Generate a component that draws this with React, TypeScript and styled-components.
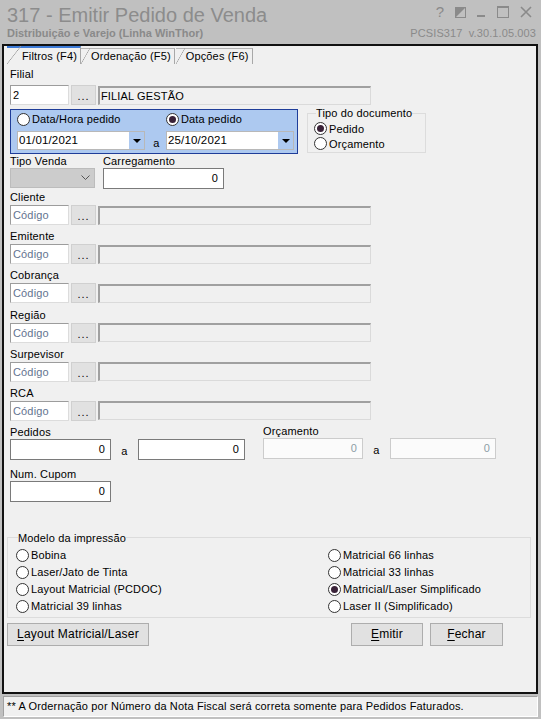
import React from 'react';
import styled, { createGlobalStyle } from 'styled-components';

const GlobalStyle = createGlobalStyle`
    html, body {
        margin: 0;
        padding: 0;
    }
    body {
        background: #c0c0c0;
        font-family: "Liberation Sans", Arial, sans-serif;
        font-size: 11px;
        letter-spacing: 0.15px;
        color: #000;
    }
    * {
        box-sizing: border-box;
    }
`;

const Window = styled.div`
    width: 541px;
    height: 719px;
    display: flex;
    flex-direction: column;
    background: #c0c0c0;
    overflow: hidden;
`;

const Header = styled.div`
    height: 44px;
    flex: none;
    display: flex;
    justify-content: space-between;
    padding: 3px 5px 0 7px;
    color: #8a8a8a;
    letter-spacing: 0;
`;

const TitleBlock = styled.div`
    display: flex;
    flex-direction: column;
`;

const Title = styled.div`
    font-size: 20px;
    line-height: 24px;
    color: #8c8c8c;
`;

const Subtitle = styled.div`
    font-size: 11px;
    font-weight: bold;
    line-height: 13px;
`;

const HeaderRight = styled.div`
    display: flex;
    flex-direction: column;
    align-items: flex-end;
`;

const WindowButtons = styled.div`
    display: flex;
    align-items: center;
    gap: 11px;
    height: 16px;
    margin-top: 1px;
    margin-bottom: 7px;
    padding-right: 4px;
`;

const HelpGlyph = styled.span`
    font-size: 15px;
    line-height: 16px;
    color: #8a8a8a;
`;

const Version = styled.div`
    font-size: 11px;
    line-height: 13px;
    letter-spacing: 0.1px;
`;

const Panel = styled.div`
    flex: none;
    height: 650px;
    margin: 0 3px 0 2px;
    border: 2px solid #111;
    background: #f0f0f0;
    display: flex;
    flex-direction: column;
`;

const TabStrip = styled.div`
    display: flex;
    align-items: flex-end;
    height: 18px;
    padding-left: 3px;
`;

const Tab = styled.div<{ $active?: boolean }>`
    position: relative;
    height: ${p => (p.$active ? 18 : 16)}px;
    line-height: ${p => (p.$active ? 17 : 15)}px;
    padding: 0 3px 0 ${p => (p.$active ? 15 : 10)}px;
    margin-right: ${p => (p.$active ? 0 : 1)}px;
    border-top: ${p => (p.$active ? '2px solid #3d7ad6' : '1px solid #b4b4b4')};
    border-right: 1px solid #a8a8a8;
    &::before {
        content: '';
        position: absolute;
        left: 0;
        top: ${p => (p.$active ? -2 : -1)}px;
        bottom: 0;
        width: ${p => (p.$active ? 14 : 9)}px;
        background: linear-gradient(to top left, transparent calc(50% - 0.6px), #a0a0a0 50%, transparent calc(50% + 0.6px));
    }
`;

const Sheet = styled.div`
    flex: 1;
    padding: 4px 0 0 6px;
    display: flex;
    flex-direction: column;
`;

const Label = styled.div`
    line-height: 13px;
    height: 13px;
    white-space: nowrap;
`;

const Row = styled.div`
    display: flex;
    align-items: center;
    gap: 2px;
`;

const CodeInput = styled.input`
    width: 59px;
    height: 20px;
    padding: 0 2px;
    font: inherit;
    letter-spacing: inherit;
    color: #000;
    background: #fff;
    border: 1px solid;
    border-color: #9c9c9c #dcdcdc #dcdcdc #9c9c9c;
    outline: none;
    &::placeholder {
        color: #63738f;
    }
`;

const DotsButton = styled.div`
    width: 25px;
    height: 20px;
    background: #e1e1e1;
    border: 1px solid #d0d0d0;
    text-align: center;
    line-height: 20px;
    letter-spacing: 1px;
`;

const NameField = styled.div`
    width: 273px;
    height: 19px;
    background: #f0f0f0;
    border-style: solid;
    border-width: 2px 1px 1px 2px;
    border-color: #a0a0a0 #dadada #dadada #a0a0a0;
    padding-left: 1px;
    line-height: 16px;
    white-space: nowrap;
`;

const NumberBox = styled.div<{ $w: number; $disabled?: boolean }>`
    width: ${p => p.$w}px;
    height: 21px;
    background: ${p => (p.$disabled ? '#fbfbfb' : '#fff')};
    border: 1px solid ${p => (p.$disabled ? '#cccccc' : '#7a7a7a')};
    color: ${p => (p.$disabled ? '#8d9ea6' : '#000')};
    text-align: right;
    padding-right: 5px;
    line-height: 18px;
`;

const Between = styled.span`
    width: 27px;
    text-align: center;
    padding-top: 6px;
`;

const DateBlock = styled.div`
    display: flex;
    align-items: flex-start;
    gap: 9px;
    margin-top: 4px;
`;

const BluePanel = styled.div`
    width: 288px;
    height: 45px;
    background: #adc9f0;
    border: 1px solid #1f3d99;
    padding: 1px 3px 0 6px;
    display: grid;
    grid-template-columns: 128px 21px 128px;
    grid-template-rows: 16px 19px;
    row-gap: 4px;
`;

const RadioLabel = styled.label<{ $col?: number }>`
    display: flex;
    align-items: center;
    gap: 2px;
    height: 16px;
    white-space: nowrap;
    ${p => (p.$col ? `grid-column: ${p.$col};` : '')}
`;

const RadioCircle = styled.span<{ $checked?: boolean }>`
    flex: none;
    width: 13px;
    height: 13px;
    border-radius: 50%;
    border: 1px solid #333;
    background: #fff;
    display: flex;
    align-items: center;
    justify-content: center;
    &::after {
        content: '';
        width: 7px;
        height: 7px;
        border-radius: 50%;
        background: ${p => (p.$checked ? '#3a2238' : 'transparent')};
    }
`;

const DateCombo = styled.div`
    display: flex;
    height: 19px;
    background: #fff;
    border: 1px solid #b8b8b8;
`;

const DateText = styled.div`
    flex: 1;
    padding-left: 1px;
    line-height: 17px;
    font-size: 11.5px;
`;

const DropButton = styled.div`
    width: 15px;
    background: #adc9f0;
    display: flex;
    align-items: center;
    justify-content: center;
    &::after {
        content: '';
        border-left: 4px solid transparent;
        border-right: 4px solid transparent;
        border-top: 4px solid #000;
    }
`;

const DateSep = styled.span`
    align-self: end;
    text-align: center;
    line-height: 14px;
    padding-left: 2px;
`;

const GroupBox = styled.fieldset<{ $w: number }>`
    width: ${p => p.$w}px;
    margin: 0;
    border: 1px solid #dcdcdc;
    padding: 0;
    min-inline-size: 0;
`;

const Legend = styled.legend`
    padding: 0;
    margin-left: 2px;
    line-height: 12px;
`;

const DocGroup = styled(GroupBox)`
    margin-top: -2px;
    padding: 2px 0 1px 6px;
    display: flex;
    flex-direction: column;
`;

const StackedRadio = styled(RadioLabel)`
    height: 15px;
`;

const PairRow = styled.div`
    display: flex;
    gap: 8px;
    margin-top: 1px;
`;

const Column = styled.div`
    display: flex;
    flex-direction: column;
`;

const ComboDisabled = styled.div`
    width: 85px;
    height: 20px;
    background: #cccccc;
    border: 1px solid #bcbcbc;
    display: flex;
    justify-content: flex-end;
    align-items: center;
    padding-right: 4px;
`;

const Lookups = styled.div`
    display: flex;
    flex-direction: column;
    gap: 5.2px;
    margin-top: 2px;
`;

const LookupLabel = styled(Label)`
    height: 14px;
    line-height: 13px;
`;

const RangeBlock = styled.div`
    display: flex;
    margin-top: 5px;
`;

const RangeGroup = styled.div<{ $ml?: number }>`
    display: flex;
    flex-direction: column;
    margin-left: ${p => p.$ml || 0}px;
`;

const RangeRow = styled.div`
    display: flex;
    align-items: flex-start;
`;

const CupomBlock = styled.div`
    display: flex;
    flex-direction: column;
    margin-top: 8px;
`;

const PrintGroup = styled(GroupBox)`
    margin-top: 30px;
    margin-left: -3px;
    padding: 3px 0 2px 8px;
    display: grid;
    grid-template-columns: 312px 1fr;
    grid-auto-flow: column;
    grid-template-rows: repeat(4, 17px);
`;

const PrintRadio = styled(RadioLabel)`
    height: 17px;
`;

const ButtonBar = styled.div`
    display: flex;
    align-items: center;
    margin: 5px 0 0 -3px;
`;

const Button = styled.div<{ $w: number }>`
    width: ${p => p.$w}px;
    height: 23px;
    background: #e1e1e1;
    border: 1px solid #adadad;
    display: flex;
    align-items: center;
    justify-content: center;
    font-size: 12px;
    letter-spacing: 0.2px;
    & u {
        text-decoration: underline;
        text-underline-offset: 2px;
    }
`;

const Spacer = styled.div`
    flex: 1;
`;

const StatusBar = styled.div`
    flex: none;
    height: 21px;
    margin: 2px 3px 0 3px;
    background: #f0f0f0;
    border: 1px solid;
    border-color: #a0a0a0 #ffffff #ffffff #a0a0a0;
    padding-left: 3px;
    line-height: 19px;
    white-space: nowrap;
`;

const Radio: React.FC<{ label: string; checked?: boolean; col?: number }> = ({ label, checked, col }) => (
    <RadioLabel $col={col}>
        <RadioCircle $checked={checked} />
        {label}
    </RadioLabel>
);

const lookups = ['Cliente', 'Emitente', 'Cobrança', 'Região', 'Surpevisor', 'RCA'];

const leftPrint = ['Bobina', 'Laser/Jato de Tinta', 'Layout Matricial (PCDOC)', 'Matricial 39 linhas'];
const rightPrint = [
    'Matricial 66 linhas',
    'Matricial 33 linhas',
    'Matricial/Laser Simplificado',
    'Laser II (Simplificado)'
];

const App: React.FC = () => {
    return (
        <Window>
            <GlobalStyle />
            <Header>
                <TitleBlock>
                    <Title>317 - Emitir Pedido de Venda</Title>
                    <Subtitle>Distribuição e Varejo (Linha WinThor)</Subtitle>
                </TitleBlock>
                <HeaderRight>
                    <WindowButtons>
                        <HelpGlyph>?</HelpGlyph>
                        <svg width="11" height="11" viewBox="0 0 11 11">
                            <rect x="0.5" y="0.5" width="10" height="10" fill="none" stroke="#8a8a8a" />
                            <path d="M1 10 L10 1 L1 1 Z" fill="#8a8a8a" />
                        </svg>
                        <svg width="9" height="12" viewBox="0 0 9 12">
                            <rect x="0" y="9" width="8" height="2" fill="#8a8a8a" />
                        </svg>
                        <svg width="12" height="12" viewBox="0 0 12 12">
                            <rect x="0.5" y="0.5" width="11" height="11" fill="none" stroke="#8a8a8a" />
                            <rect x="0.5" y="0.5" width="11" height="1.5" fill="#8a8a8a" />
                        </svg>
                        <svg width="12" height="12" viewBox="0 0 12 12">
                            <path d="M1 1 L11 11 M11 1 L1 11" stroke="#8a8a8a" strokeWidth="1.6" />
                        </svg>
                    </WindowButtons>
                    <Version>PCSIS317&nbsp; v.30.1.05.003</Version>
                </HeaderRight>
            </Header>

            <Panel>
                <TabStrip>
                    <Tab $active>Filtros (F4)</Tab>
                    <Tab>Ordenação (F5)</Tab>
                    <Tab>Opções (F6)</Tab>
                </TabStrip>
                <Sheet>
                    <Label>Filial</Label>
                    <Row style={{ marginTop: 4 }}>
                        <CodeInput readOnly value="2" />
                        <DotsButton>...</DotsButton>
                        <NameField>FILIAL GESTÃO</NameField>
                    </Row>

                    <DateBlock>
                        <BluePanel>
                            <Radio label="Data/Hora pedido" />
                            <Radio label="Data pedido" checked col={3} />
                            <DateCombo>
                                <DateText>01/01/2021</DateText>
                                <DropButton />
                            </DateCombo>
                            <DateSep>a</DateSep>
                            <DateCombo>
                                <DateText>25/10/2021</DateText>
                                <DropButton />
                            </DateCombo>
                        </BluePanel>
                        <DocGroup $w={119}>
                            <Legend>Tipo do documento</Legend>
                            <StackedRadio>
                                <RadioCircle $checked />
                                Pedido
                            </StackedRadio>
                            <StackedRadio>
                                <RadioCircle />
                                Orçamento
                            </StackedRadio>
                        </DocGroup>
                    </DateBlock>

                    <PairRow>
                        <Column>
                            <Label>Tipo Venda</Label>
                            <ComboDisabled>
                                <svg width="9" height="6" viewBox="0 0 9 6">
                                    <path d="M0.5 0.5 L4.5 4.5 L8.5 0.5" fill="none" stroke="#555" />
                                </svg>
                            </ComboDisabled>
                        </Column>
                        <Column>
                            <Label>Carregamento</Label>
                            <NumberBox $w={121}>0</NumberBox>
                        </Column>
                    </PairRow>

                    <Lookups>
                        {lookups.map(name => (
                            <Column key={name}>
                                <LookupLabel>{name}</LookupLabel>
                                <Row>
                                    <CodeInput readOnly placeholder="Código" />
                                    <DotsButton>...</DotsButton>
                                    <NameField />
                                </Row>
                            </Column>
                        ))}
                    </Lookups>

                    <RangeBlock>
                        <RangeGroup>
                            <Label>Pedidos</Label>
                            <RangeRow>
                                <NumberBox $w={101}>0</NumberBox>
                                <Between>a</Between>
                                <NumberBox $w={107}>0</NumberBox>
                            </RangeRow>
                        </RangeGroup>
                        <RangeGroup $ml={18}>
                            <Label style={{ marginTop: -1 }}>Orçamento</Label>
                            <RangeRow>
                                <NumberBox $w={100} $disabled>0</NumberBox>
                                <Between>a</Between>
                                <NumberBox $w={106} $disabled>0</NumberBox>
                            </RangeRow>
                        </RangeGroup>
                    </RangeBlock>

                    <CupomBlock>
                        <Label>Num. Cupom</Label>
                        <RangeRow>
                            <NumberBox $w={101}>0</NumberBox>
                        </RangeRow>
                    </CupomBlock>

                    <PrintGroup $w={524}>
                        <Legend>Modelo da impressão</Legend>
                        {leftPrint.map(l => (
                            <PrintRadio key={l}>
                                <RadioCircle />
                                {l}
                            </PrintRadio>
                        ))}
                        {rightPrint.map(l => (
                            <PrintRadio key={l}>
                                <RadioCircle $checked={l === 'Matricial/Laser Simplificado'} />
                                {l}
                            </PrintRadio>
                        ))}
                    </PrintGroup>

                    <ButtonBar>
                        <Button $w={142}>
                            <span><u>L</u>ayout Matricial/Laser</span>
                        </Button>
                        <Spacer />
                        <Button $w={72}>
                            <span><u>E</u>mitir</span>
                        </Button>
                        <Button $w={73} style={{ marginLeft: 7, marginRight: 33 }}>
                            <span><u>F</u>echar</span>
                        </Button>
                    </ButtonBar>
                </Sheet>
            </Panel>

            <StatusBar>** A Ordernação por Número da Nota Fiscal será correta somente para Pedidos Faturados.</StatusBar>
        </Window>
    );
};

export default App;
